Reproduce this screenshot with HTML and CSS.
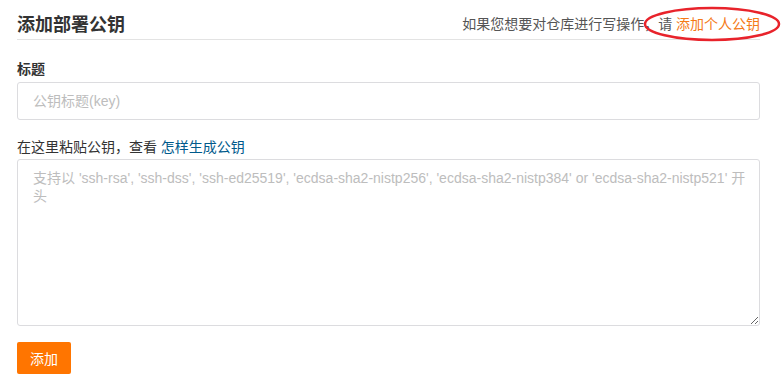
FILE: index.html
```html
<!DOCTYPE html>
<html lang="zh-CN">
<head>
<meta charset="utf-8">
<title>添加部署公钥</title>
<link rel="stylesheet" href="styles.css">
</head>
<body>
<div class="page">
  <div class="header">
    <h2 class="title">添加部署公钥</h2>
    <div class="hint">如果您想要对仓库进行写操作，请 <a class="orange" href="#">添加个人公钥</a></div>
  </div>
  <form class="form">
    <label class="label">标题</label>
    <input class="input" type="text" placeholder="公钥标题(key)">
    <label class="label label2">在这里粘贴公钥，查看 <a class="link" href="#">怎样生成公钥</a></label>
    <textarea class="textarea" placeholder="支持以 'ssh-rsa', 'ssh-dss', 'ssh-ed25519', 'ecdsa-sha2-nistp256', 'ecdsa-sha2-nistp384' or 'ecdsa-sha2-nistp521' 开头"></textarea>
    <div class="actions"><button class="btn" type="button">添加</button></div>
  </form>
</div>
<svg class="annot" width="140" height="38" viewBox="0 0 140 38">
  <ellipse cx="69" cy="19" rx="67" ry="16" fill="none" stroke="#e8232b" stroke-width="2.5"/>
</svg>
</body>
</html>
```
FILE: styles.css
```css
html, body {
  margin: 0;
  padding: 0;
  background: #fff;
}
body {
  font-family: "Noto Sans", "Noto Sans CJK SC", sans-serif;
  color: #333;
  position: relative;
}
.page {
  padding: 0 23px 0 17px;
}
.header {
  display: flex;
  justify-content: space-between;
  align-items: center;
  height: 39px;
  border-bottom: 1px solid #e3e3e3;
}
.title {
  margin: 0;
  font-size: 18px;
  font-weight: 700;
  color: #333;
  padding-top: 6px;
}
.hint {
  font-size: 14px;
  color: #555;
  padding-top: 6px;
}
.orange {
  color: #f57a17;
  text-decoration: none;
}
.form {
  display: flex;
  flex-direction: column;
  margin: 0;
}
.label {
  display: block;
  font-size: 14px;
  line-height: 20px;
  font-weight: 700;
  color: #333;
  margin-top: 19px;
  margin-bottom: 3px;
}
.label2 {
  font-weight: 400;
  margin-top: 17px;
  margin-bottom: 2px;
}
.link {
  color: #005a8c;
  text-decoration: none;
}
.input, .textarea {
  box-sizing: border-box;
  width: 100%;
  border: 1px solid #dcdcdf;
  border-radius: 3px;
  font-family: "Liberation Sans", "Noto Sans CJK SC", sans-serif;
  font-size: 14px;
  color: #333;
  outline: none;
  margin: 0;
  background: #fff;
}
.input {
  height: 38px;
  padding: 0 15px;
}
.textarea {
  height: 167px;
  padding: 9px 10px 9px 15px;
  line-height: 18px;
  resize: vertical;
}
.input::placeholder, .textarea::placeholder {
  color: #bdbdbd;
}
.actions {
  margin-top: 16px;
}
.btn {
  width: 54px;
  height: 32px;
  border: none;
  border-radius: 2px;
  background: #ff7500;
  color: #fff;
  font-family: "Noto Sans CJK SC", sans-serif;
  font-size: 14px;
  padding: 0;
  cursor: pointer;
}
.annot {
  position: absolute;
  left: 643px;
  top: 5px;
}
```
